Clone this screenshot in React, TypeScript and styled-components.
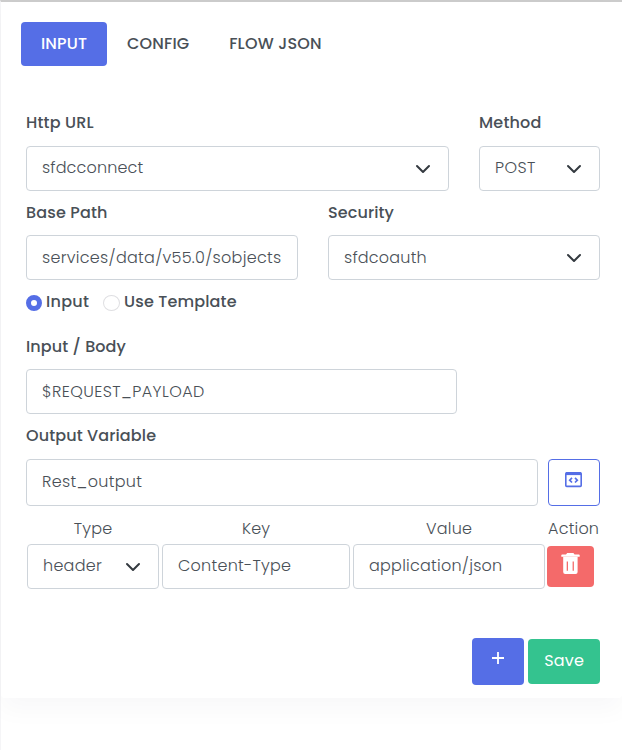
import React from 'react';
import styled, { createGlobalStyle } from 'styled-components';

const Global = createGlobalStyle`
  *, *::before, *::after { box-sizing: border-box; }
  body {
    margin: 0;
    background: #fff;
    color: #495057;
    font: 300 16px/24px Poppins, Inter, sans-serif;
    overflow: hidden;
  }
`;

const Page = styled.div`
  height: 750px;
  border-top: 2px solid #ccc;
  border-left: 1px solid #f5f5f7;
`;

const Card = styled.main`
  display: flex;
  flex-direction: column;
  height: 696px;
  padding: 20px 22px 13px 20px;
  background: #fff;
  border-radius: 4px;
  box-shadow: 0 12px 24px rgba(18, 38, 63, 0.03);
`;

const Tabs = styled.nav`
  display: flex;
  height: 44px;
`;

const Tab = styled.button<{ $active?: boolean }>`
  height: 44px;
  padding: 0 20px 1px;
  border: 0;
  border-radius: 4px;
  background: ${p => (p.$active ? '#556ee6' : 'transparent')};
  color: ${p => (p.$active ? '#fff' : '#495057')};
  font: 500 16px/24px Poppins, Inter, sans-serif;
  white-space: nowrap;
`;

const Form = styled.form`
  display: flex;
  flex-direction: column;
  flex: 1;
  padding: 44px 0 0 5px;
`;

const Row = styled.div<{ $cols: string; $height: number; $gap?: number }>`
  display: grid;
  grid-template-columns: ${p => p.$cols};
  column-gap: ${p => p.$gap ?? 30}px;
  height: ${p => p.$height}px;
`;

const Label = styled.label<{ $space?: number }>`
  display: block;
  height: 24px;
  padding-top: 1px;
  margin-bottom: ${p => p.$space ?? 12}px;
  font-weight: 500;
  white-space: nowrap;
`;

const Control = styled.div<{ $height?: number; $low?: boolean }>`
  display: flex;
  align-items: center;
  justify-content: space-between;
  height: ${p => p.$height ?? 45}px;
  padding: 0 17px ${p => (p.$low ? 0 : 2)}px 15px;
  border: 1px solid #ced4da;
  border-radius: 4px;
  background: #fff;
  white-space: nowrap;
`;

const Tracked = styled.span<{ $t: number }>`
  letter-spacing: ${p => p.$t}px;
  margin-right: ${p => -p.$t}px;
`;

const ChevronSvg = styled.svg<{ $low?: boolean }>`
  flex: none;
  margin-top: ${p => (p.$low ? 0 : 2)}px;
`;

const Radios = styled.div`
  display: flex;
  height: 44px;
  font-weight: 500;
`;

const Option = styled.label<{ $width: number }>`
  display: flex;
  width: ${p => p.$width}px;
  gap: 4px;
  white-space: nowrap;
`;

const Dot = styled.span<{ $on?: boolean }>`
  flex: none;
  width: ${p => (p.$on ? 16 : 17)}px;
  height: 16px;
  margin-top: 5px;
  border: ${p => (p.$on ? '5px solid #556ee6' : '1px solid #dfdfe2')};
  border-radius: 50%;
`;

const IconButton = styled.button<{ $kind: 'outline' | 'primary' | 'danger' }>`
  display: flex;
  justify-content: center;
  align-items: flex-start;
  width: ${p => (p.$kind === 'danger' ? 47 : 52)}px;
  height: ${p => (p.$kind === 'danger' ? 41 : 47)}px;
  margin: ${p => (p.$kind === 'danger' ? '2px 0 0 -1px' : '0')};
  padding: ${p => ({ outline: '12px 1px 0 0', primary: '14px 0 0', danger: '7px 0 0' })[p.$kind]};
  border: ${p => (p.$kind === 'outline' ? '1px solid #556ee6' : '0')};
  border-radius: 4px;
  background: ${p => ({ outline: '#fff', primary: '#556ee6', danger: '#f46a6a' })[p.$kind]};
`;

const Headings = styled.div`
  display: grid;
  grid-template-columns: 132px 188px 192px 50px;
  column-gap: 3px;
  height: 28px;
  padding: 1px 0 0 1px;
  text-align: center;
  white-space: nowrap;
`;

const HeaderRow = styled.div`
  display: grid;
  grid-template-columns: 132px 188px 192px 47px;
  column-gap: 3px;
  padding-left: 1px;
`;

const Footer = styled.footer`
  display: flex;
  justify-content: flex-end;
  gap: 4px;
  margin-top: auto;
`;

const Save = styled.button`
  width: 72px;
  height: 45px;
  margin-top: 1px;
  padding: 0 0 1px;
  border: 0;
  border-radius: 4px;
  background: #34c38f;
  color: #fff;
  font: 400 16px/24px Poppins, Inter, sans-serif;
`;

interface FieldProps {
  value: string;
  t: number;
  select?: boolean;
  height?: number;
  low?: boolean;
}

const Field = ({ value, t, select, height, low }: FieldProps) => (
  <Control $height={height} $low={low}>
    <Tracked $t={t}>{value}</Tracked>
    {select && (
      <ChevronSvg $low={low} width="16" height="16" viewBox="0 0 16 16" fill="none" stroke="#343a40" strokeWidth="2" strokeLinecap="round" strokeLinejoin="round">
        <path d="M2 5l6 6 6-6" />
      </ChevronSvg>
    )}
  </Control>
);

const CodeIcon = () => (
  <svg width="17" height="16" viewBox="0 0 17 16" fill="none" stroke="#556ee6">
    <rect x="0.8" y="0.8" width="15.4" height="13.6" rx="0.9" strokeWidth="1.6" />
    <path d="M1 1.6h15" strokeWidth="3" />
    <path d="M7 5.9L4.7 8.2 7 10.5M10 5.9l2.3 2.3-2.3 2.3" strokeWidth="1.7" />
  </svg>
);

const TrashIcon = () => (
  <svg width="19" height="22" viewBox="0 0 19 22">
    <path fill="#fff" d="M6.2 0h6.2l1.2 1.4h4.2q.9 0 .9.9v1.4H.3V2.3q0-.9.9-.9H5z" />
    <path fill="#fff" fillRule="evenodd" d="M2.2 3.7h14.4V19q0 2-2 2H4.2q-2 0-2-2zM5.7 8.5v9.2H7V8.5zM11.6 8.5v9.2h1.3V8.5z" />
  </svg>
);

const PlusIcon = () => (
  <svg width="12" height="12" viewBox="0 0 12 12" stroke="#fff" strokeWidth="1.8">
    <path d="M6 0v12M0 6h12" />
  </svg>
);

export default function App() {
  return (
    <Page>
      <Global />
      <Card>
        <Tabs>
          <Tab $active><Tracked $t={0.15}>INPUT</Tracked></Tab>
          <Tab><Tracked $t={0.18}>CONFIG</Tracked></Tab>
          <Tab><Tracked $t={0.2}>FLOW JSON</Tracked></Tab>
        </Tabs>
        <Form onSubmit={e => e.preventDefault()}>
          <Row $cols="423px 121px" $height={90}>
            <div>
              <Label><Tracked $t={0.15}>Http URL</Tracked></Label>
              <Field value="sfdcconnect" t={0.15} select />
            </div>
            <div>
              <Label><Tracked $t={0.2}>Method</Tracked></Label>
              <Field value="POST" t={0.41} select />
            </div>
          </Row>
          <Row $cols="272px 272px" $height={90}>
            <div>
              <Label $space={11}><Tracked $t={0.15}>Base Path</Tracked></Label>
              <Field value="services/data/v55.0/sobjects" t={0.29} low />
            </div>
            <div>
              <Label $space={11}><Tracked $t={0.1}>Security</Tracked></Label>
              <Field value="sfdcoauth" t={0.22} select low />
            </div>
          </Row>
          <Radios>
            <Option $width={77}><Dot $on /><Tracked $t={0.29}>Input</Tracked></Option>
            <Option $width={140}><Dot /><Tracked $t={0.15}>Use Template</Tracked></Option>
          </Radios>
          <Row $cols="431px" $height={89}>
            <div>
              <Label $space={11}><Tracked $t={0.1}>Input / Body</Tracked></Label>
              <Field value="$REQUEST_PAYLOAD" t={0.42} low />
            </div>
          </Row>
          <Label><Tracked $t={0.12}>Output Variable</Tracked></Label>
          <Row $cols="512px 52px" $height={57} $gap={10}>
            <Field value="Rest_output" t={0.33} height={47} />
            <IconButton type="button" $kind="outline" aria-label="Edit code"><CodeIcon /></IconButton>
          </Row>
          <Headings>
            <Tracked $t={0.2}>Type</Tracked>
            <Tracked $t={0.2}>Key</Tracked>
            <Tracked $t={0.2}>Value</Tracked>
            <Tracked $t={0.2}>Action</Tracked>
          </Headings>
          <HeaderRow>
            <Field value="header" t={0.25} select />
            <Field value="Content-Type" t={0.25} />
            <Field value="application/json" t={0.25} />
            <IconButton type="button" $kind="danger" aria-label="Delete"><TrashIcon /></IconButton>
          </HeaderRow>
          <Footer>
            <IconButton type="button" $kind="primary" aria-label="Add"><PlusIcon /></IconButton>
            <Save type="button"><Tracked $t={0.2}>Save</Tracked></Save>
          </Footer>
        </Form>
      </Card>
    </Page>
  );
}
